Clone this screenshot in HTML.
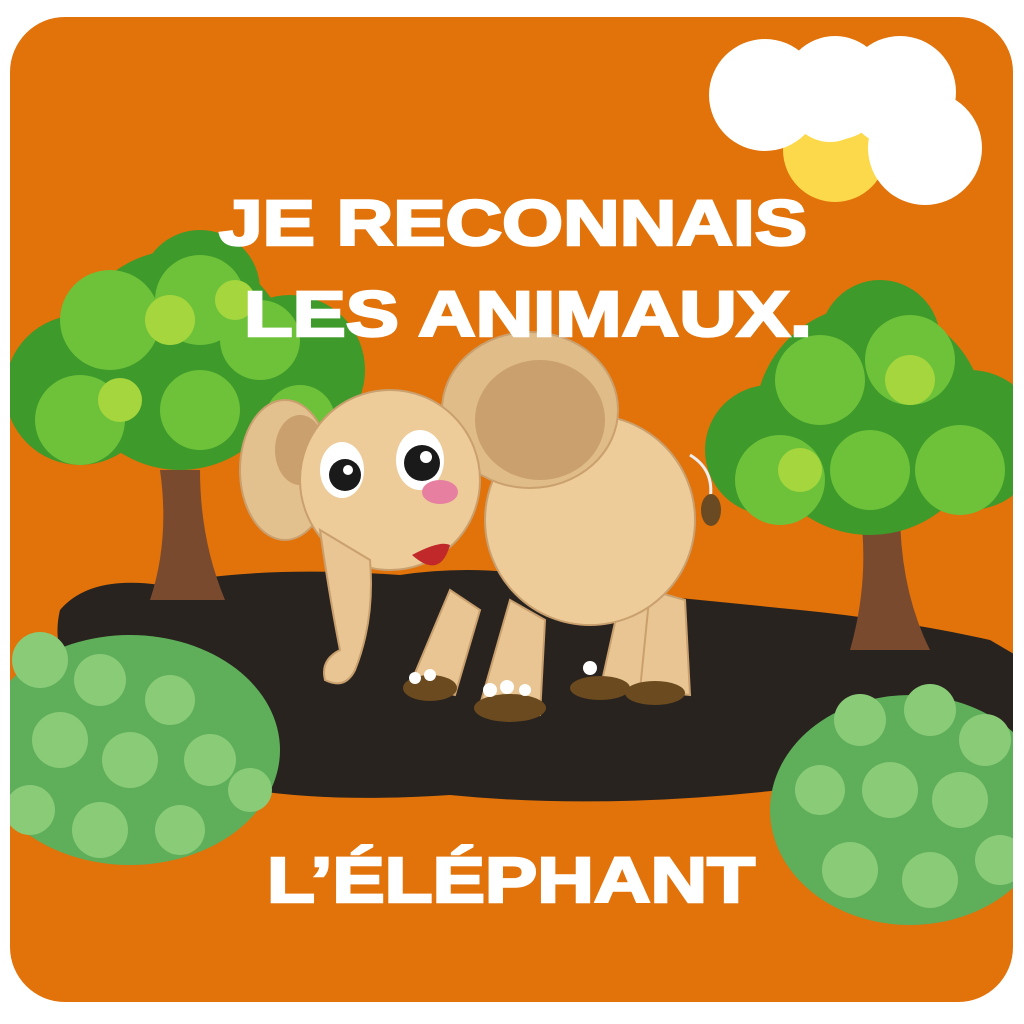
<!DOCTYPE html>
<html><head><meta charset="utf-8"><style>
html,body{margin:0;padding:0;background:#fff;width:1024px;height:1024px;overflow:hidden}
svg{display:block}
text{font-family:"Liberation Sans",sans-serif;font-weight:bold;fill:#fff;stroke:#fff;stroke-width:2.5}
</style></head><body>
<svg width="1024" height="1024" viewBox="0 0 1024 1024">
<defs>
<clipPath id="c"><rect x="10" y="17" width="1003" height="985" rx="55"/></clipPath>
</defs>
<rect width="1024" height="1024" fill="#fff"/>
<g clip-path="url(#c)">
<rect x="0" y="0" width="1024" height="1024" fill="#E2720A"/>
<!-- sun & clouds -->
<circle cx="835" cy="150" r="52" fill="#FCD94A"/>
<g fill="#fff">
<circle cx="765" cy="95" r="56"/><circle cx="835" cy="88" r="52"/><circle cx="900" cy="92" r="56"/><circle cx="925" cy="148" r="57"/>
<circle cx="830" cy="100" r="42"/>
</g>
<!-- ground -->
<path d="M60 610 Q90 575 160 585 Q260 565 400 575 Q500 560 600 590 Q700 600 800 610 Q900 620 990 640 L1024 660 L1024 780 Q900 800 780 790 Q600 810 450 795 Q300 805 200 780 Q100 760 80 700 Q50 650 60 610Z" fill="#28231F"/>
<!-- left tree -->
<path d="M150 600 Q170 540 160 470 L200 470 Q200 540 225 600Z" fill="#7A4A2E"/>
<g fill="#3E9A2A"><circle cx="180" cy="360" r="110"/><circle cx="80" cy="390" r="75"/><circle cx="290" cy="370" r="75"/><circle cx="200" cy="290" r="60"/></g>
<g fill="#6DC23A"><circle cx="110" cy="320" r="50"/><circle cx="200" cy="300" r="45"/><circle cx="80" cy="420" r="45"/><circle cx="260" cy="340" r="40"/><circle cx="200" cy="410" r="40"/><circle cx="300" cy="420" r="35"/></g>
<g fill="#A6D63E"><circle cx="170" cy="320" r="25"/><circle cx="120" cy="400" r="22"/><circle cx="235" cy="300" r="20"/></g>
<!-- right tree -->
<path d="M850 650 Q870 580 860 510 L900 510 Q900 590 930 650Z" fill="#7A4A2E"/>
<g fill="#3E9A2A"><circle cx="870" cy="420" r="115"/><circle cx="770" cy="450" r="65"/><circle cx="970" cy="440" r="70"/><circle cx="880" cy="340" r="60"/></g>
<g fill="#6DC23A"><circle cx="820" cy="380" r="45"/><circle cx="910" cy="360" r="45"/><circle cx="780" cy="480" r="45"/><circle cx="960" cy="470" r="45"/><circle cx="870" cy="470" r="40"/></g>
<g fill="#A6D63E"><circle cx="910" cy="380" r="25"/><circle cx="800" cy="470" r="22"/></g>
<!-- bushes -->
<g fill="#5FAE5A"><ellipse cx="130" cy="750" rx="150" ry="115"/><ellipse cx="910" cy="810" rx="140" ry="115"/></g>
<g fill="#8ACB78"><circle cx="40" cy="660" r="28"/><circle cx="100" cy="680" r="26"/><circle cx="170" cy="700" r="25"/><circle cx="60" cy="740" r="28"/><circle cx="130" cy="760" r="28"/><circle cx="210" cy="760" r="26"/><circle cx="30" cy="810" r="25"/><circle cx="100" cy="830" r="28"/><circle cx="180" cy="830" r="25"/><circle cx="250" cy="790" r="22"/>
<circle cx="860" cy="720" r="26"/><circle cx="930" cy="710" r="26"/><circle cx="985" cy="740" r="26"/><circle cx="820" cy="790" r="25"/><circle cx="890" cy="790" r="28"/><circle cx="960" cy="800" r="28"/><circle cx="850" cy="870" r="28"/><circle cx="930" cy="880" r="28"/><circle cx="1000" cy="860" r="25"/></g>
<!-- elephant -->
<g stroke="#C9A06E" stroke-width="2">
<path d="M690 455 Q715 470 710 500" fill="none" stroke="#eee" stroke-width="3"/>
<ellipse cx="711" cy="510" rx="10" ry="16" fill="#6A4A22" stroke="none"/>
<path d="M620 600 L600 690 L650 690 L655 610Z" fill="#E8C592"/>
<path d="M650 590 L640 690 L690 695 L685 600Z" fill="#E8C592"/>
<path d="M450 590 L410 685 L455 695 L480 610Z" fill="#E8C592"/>
<path d="M510 600 L480 705 L540 715 L545 620Z" fill="#E8C592"/>
<ellipse cx="590" cy="520" rx="105" ry="105" fill="#EDCC9A"/>
<ellipse cx="530" cy="410" rx="88" ry="78" fill="#E0BC88"/>
<ellipse cx="540" cy="420" rx="65" ry="60" fill="#C9A06E" stroke="none"/>
<ellipse cx="285" cy="470" rx="45" ry="70" fill="#E3C18E"/>
<ellipse cx="300" cy="450" rx="25" ry="35" fill="#C9A06E" stroke="none"/>
<ellipse cx="390" cy="480" rx="90" ry="90" fill="#EDCC9A"/>
<path d="M320 530 Q330 600 340 650 Q320 660 325 680 Q345 690 355 670 Q375 620 370 560Z" fill="#E8C592"/>
</g>
<g fill="#6A4A1E"><ellipse cx="430" cy="688" rx="27" ry="13"/><ellipse cx="510" cy="708" rx="36" ry="14"/><ellipse cx="600" cy="688" rx="30" ry="12"/><ellipse cx="655" cy="693" rx="30" ry="12"/></g>
<g fill="#fff"><circle cx="415" cy="678" r="6"/><circle cx="430" cy="675" r="6"/><circle cx="490" cy="690" r="7"/><circle cx="507" cy="687" r="7"/><circle cx="525" cy="690" r="6"/><circle cx="590" cy="668" r="7"/></g>
<ellipse cx="342" cy="470" rx="22" ry="28" fill="#fff"/><circle cx="345" cy="475" r="16" fill="#1a1a1a"/><circle cx="348" cy="470" r="5" fill="#fff"/>
<ellipse cx="420" cy="460" rx="24" ry="30" fill="#fff"/><circle cx="422" cy="463" r="18" fill="#1a1a1a"/><circle cx="426" cy="457" r="6" fill="#fff"/>
<ellipse cx="440" cy="492" rx="18" ry="12" fill="#E67FA0"/>
<path d="M412 555 Q440 580 450 545 Q440 540 412 555Z" fill="#C0282A"/>
<!-- text -->
<text x="219" y="245" font-size="64" textLength="588" lengthAdjust="spacingAndGlyphs">JE RECONNAIS</text>
<text x="244" y="336" font-size="64" textLength="568" lengthAdjust="spacingAndGlyphs">LES ANIMAUX.</text>
<text x="267" y="902" font-size="64" textLength="488" lengthAdjust="spacingAndGlyphs">L’ÉLÉPHANT</text>
</g>
</svg>
</body></html>
